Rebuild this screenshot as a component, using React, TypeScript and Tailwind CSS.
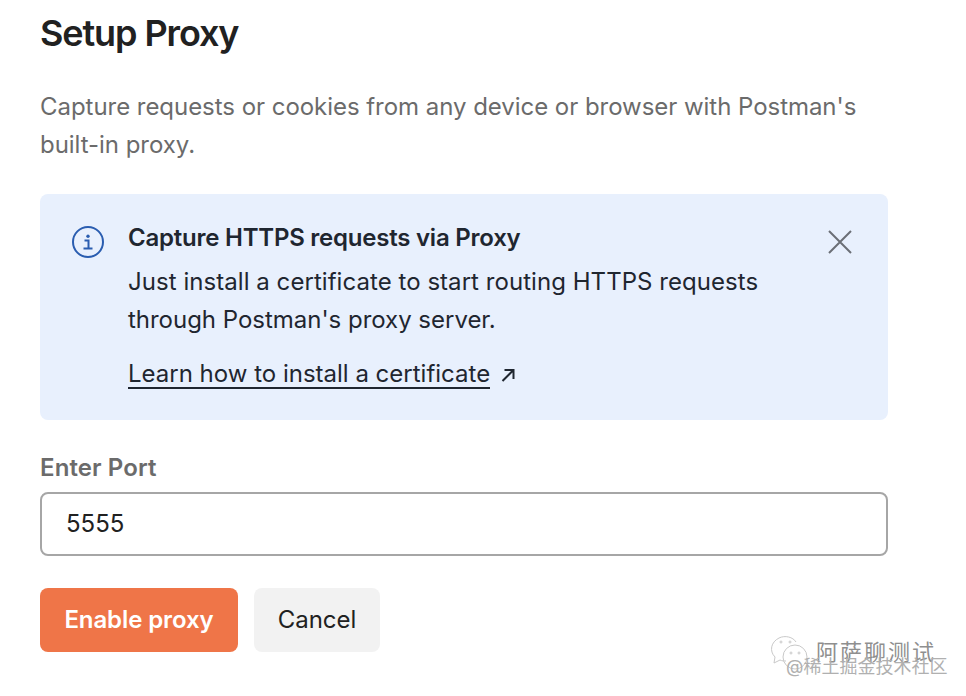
const font = { fontFamily: 'Inter, "Noto Sans CJK SC", sans-serif' };

function InfoIcon() {
  return (
    <svg width="32" height="32" viewBox="0 0 32 32" fill="none" stroke="#2a5db0" strokeWidth="2">
      <circle cx="16" cy="16" r="15" />
      <circle cx="16" cy="10.2" r="1.7" fill="#2a5db0" stroke="none" />
      <path d="M12.5 14.5h4v8M11.5 22.5h9" />
    </svg>
  );
}

export default function App() {
  return (
    <div className="relative h-[696px] w-[966px] overflow-hidden bg-white pl-10 pt-[11px]" style={font}>
      <div className="w-[848px]">
        <h1 className="text-[36px] leading-[44px] font-semibold tracking-[-1.1px] text-[#212121]">Setup Proxy</h1>
        <p className="mt-[33px] text-[24px] leading-[38px] tracking-[-0.04px] text-[#6b6b6b]">
          Capture requests or cookies from any device or browser with Postman's built-in proxy.
        </p>

        <div className="mt-[30px] flex h-[226px] rounded-lg bg-[#e8f0fd] pl-8 pr-9 pt-[25px]">
          <div className="w-14 shrink-0 pt-[7px]">
            <InfoIcon />
          </div>
          <div className="flex-1 text-[24px] leading-[38px] text-[#1f2630]">
            <div className="font-semibold tracking-[-0.23px]">Capture HTTPS requests via Proxy</div>
            <div className="mt-[6px] tracking-[0.05px]">
              Just install a certificate to start routing HTTPS requests
              <br />
              <span className="tracking-[-0.02px]">through Postman's proxy server.</span>
            </div>
            <a className="mt-[22px] flex items-center gap-[9px]">
              <span className="border-b-2 border-[#1f2630] leading-[26px]">Learn how to install a certificate</span>
              <svg width="18" height="18" viewBox="0 0 18 18" fill="none" stroke="#1f2630" strokeWidth="2">
                <path d="M3.5 15L14 4.5M5.5 4H14.5V13" />
              </svg>
            </a>
          </div>
          <div className="pt-[11px]">
            <svg width="24" height="24" viewBox="0 0 24 24" fill="none" stroke="#6b6f76" strokeWidth="2">
              <path d="M1 1L23 23M23 1L1 23" />
            </svg>
          </div>
        </div>

        <div className="mt-[30px] text-[24px] leading-[36px] font-semibold tracking-[0.1px] text-[#6b6b6b]">Enter Port</div>
        <div className="mt-[6px] flex h-[64px] items-center rounded-lg border-2 border-[#a6a6a6] px-6 text-[24px] text-[#212121]">5555</div>

        <div className="mt-8 flex gap-4">
          <button className="flex h-16 w-[198px] items-center justify-center rounded-lg bg-[#ef7548] text-[24px] font-semibold tracking-[-0.1px] text-white">
            Enable proxy
          </button>
          <button className="flex h-16 w-[126px] items-center justify-center rounded-lg bg-[#f2f2f2] text-[24px] text-[#212121]">
            Cancel
          </button>
        </div>
      </div>

      {/* watermark */}
      <div className="absolute left-[770px] top-[636px] flex items-center">
        <svg width="44" height="36" viewBox="0 0 44 36" fill="none" stroke="#c9c9c9" strokeWidth="1">
          <path d="M26 6C23 1 15-1 9 2 1 6-1 15 5 21l-1 6 6-3c2 1 4 1 6 1" />
          <circle cx="25" cy="21" r="12" />
          <circle cx="11" cy="6" r="1" />
          <circle cx="20" cy="6" r="1" />
          <circle cx="21" cy="17" r="1" />
          <circle cx="29" cy="17" r="1" />
        </svg>
      </div>
      <div className="absolute left-[816px] top-[638px] text-[22px] leading-[28px] tracking-[2px] text-[#8f8f8f]">阿萨聊测试</div>
      <div className="absolute left-[786px] top-[656px] text-[18px] leading-[22px] text-[#b0b0b0]">@稀土掘金技术社区</div>
    </div>
  );
}
